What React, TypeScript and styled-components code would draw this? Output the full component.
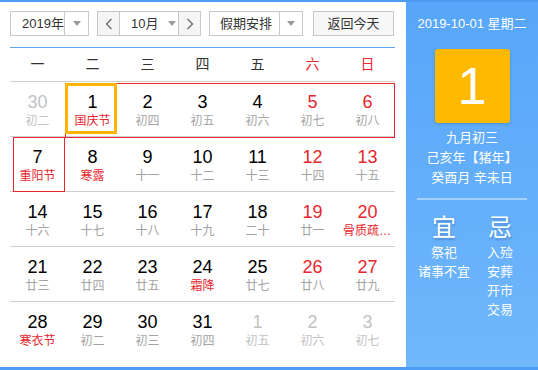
import styled, { createGlobalStyle } from 'styled-components';

const GlobalStyle = createGlobalStyle`
  html, body {
    margin: 0;
    padding: 0;
    background: #fff;
  }
  body {
    font-family: "Liberation Sans", "Noto Sans CJK SC", sans-serif;
  }
  * {
    box-sizing: border-box;
  }
`;

const RED = '#e8262d';
const GRAY = '#a3a3a3';
const MUTED = '#c2c2c2';

const Wrapper = styled.div`
  display: flex;
  width: 538px;
  height: 370px;
  border-top: 2px solid #4d9cf4;
  border-bottom: 3px solid #4d9cf4;
`;

const LeftPanel = styled.div`
  width: 406px;
  background: #fff;
  padding: 9px 11px 0 10px;
`;

const Toolbar = styled.div`
  display: flex;
  align-items: center;
  height: 25px;
`;

const Box = styled.div<{ $w: number; $ml?: number }>`
  display: flex;
  width: ${(p) => p.$w}px;
  height: 25px;
  margin-left: ${(p) => p.$ml || 0}px;
  border: 1px solid #c8c8c8;
  font-size: 13px;
  color: #333;
  white-space: nowrap;
`;

const SelectLabel = styled.div<{ $pl: number }>`
  flex: 1;
  display: flex;
  align-items: center;
  padding-left: ${(p) => p.$pl}px;
  line-height: 23px;
`;

const ArrowCell = styled.div<{ $w: number }>`
  width: ${(p) => p.$w}px;
  display: flex;
  align-items: center;
  justify-content: center;
  border-left: 1px solid #c8c8c8;
`;

const Caret = styled.span`
  flex: none;
  width: 0;
  height: 0;
  border-left: 4px solid transparent;
  border-right: 4px solid transparent;
  border-top: 5px solid #9a9a9a;
`;

const StepButton = styled.div<{ $side: 'left' | 'right' }>`
  flex: none;
  width: 22px;
  display: flex;
  align-items: center;
  justify-content: center;
  background: #f5f5f5;
  ${(p) => (p.$side === 'left' ? 'border-right' : 'border-left')}: 1px solid #c8c8c8;
`;

const MonthLabel = styled.div`
  flex: 1;
  display: flex;
  align-items: center;
  padding-left: 11px;
  gap: 10px;
  line-height: 23px;
`;

const TodayButton = styled.div`
  width: 81px;
  height: 25px;
  margin-left: 10px;
  border: 1px solid #c8c8c8;
  background: #f7f7f7;
  font-size: 13px;
  color: #333;
  text-align: center;
  line-height: 23px;
`;

const BlueLine = styled.div`
  height: 1px;
  margin-top: 11px;
  background: #5ea3ef;
`;

const WeekHeader = styled.div`
  display: grid;
  grid-template-columns: repeat(7, 55px);
  height: 33px;
`;

const WeekDay = styled.div<{ $red?: boolean }>`
  text-align: center;
  line-height: 33px;
  font-size: 14px;
  color: ${(p) => (p.$red ? RED : '#333')};
`;

const WeekRow = styled.div`
  display: grid;
  grid-template-columns: repeat(7, 55px);
  grid-template-rows: 54px;
  border-top: 1px solid #cfcfcf;
`;

const Cell = styled.div`
  grid-row: 1;
  padding-top: 10px;
  text-align: center;
  min-width: 0;
`;

const DayNum = styled.div<{ $color: string }>`
  font-size: 18px;
  line-height: 20px;
  color: ${(p) => p.$color};
`;

const Lunar = styled.div<{ $color: string }>`
  margin-top: 1px;
  padding: 0 3px;
  font-size: 12px;
  line-height: 16px;
  color: ${(p) => p.$color};
  white-space: nowrap;
  overflow: hidden;
  text-overflow: ellipsis;
`;

const HolidayFrame = styled.div<{ $from: number; $to: number; $mt: number; $ml: number }>`
  grid-row: 1;
  grid-column: ${(p) => p.$from} / ${(p) => p.$to};
  margin-top: ${(p) => p.$mt}px;
  margin-left: ${(p) => p.$ml}px;
  height: 55px;
  border: 1px solid ${RED};
  position: relative;
  z-index: 1;
  pointer-events: none;
`;

const TodayFrame = styled.div<{ $col: number }>`
  grid-row: 1;
  grid-column: ${(p) => p.$col};
  align-self: start;
  margin-top: 1px;
  width: 52px;
  height: 51px;
  border: 3px solid #ffb400;
  position: relative;
  z-index: 2;
  pointer-events: none;
`;

const RightPanel = styled.div`
  flex: 1;
  display: flex;
  flex-direction: column;
  align-items: center;
  padding-top: 12px;
  background: linear-gradient(#57a6f9, #70b7fc);
  color: #fff;
  font-size: 13px;
`;

const DateLine = styled.div`
  line-height: 20px;
`;

const BigDay = styled.div`
  width: 75px;
  height: 74px;
  margin-top: 15px;
  border-radius: 3px;
  background: #ffb900;
  box-shadow: 0 1px 3px rgba(0, 0, 0, 0.18);
  display: flex;
  align-items: center;
  justify-content: center;
  font-size: 52px;
  line-height: 1;
`;

const InfoLines = styled.div`
  margin-top: 5px;
  text-align: center;
  line-height: 20px;
`;

const Separator = styled.div`
  width: 110px;
  height: 2px;
  margin-top: 10px;
  background: rgba(255, 255, 255, 0.4);
`;

const Almanac = styled.div`
  display: flex;
  margin-top: 13px;
`;

const AlmanacCol = styled.div`
  width: 56px;
  text-align: center;
`;

const AlmanacTitle = styled.div`
  font-size: 24px;
  line-height: 30px;
  text-shadow: 1px 2px 2px rgba(40, 80, 140, 0.35);
`;

const AlmanacItem = styled.div`
  line-height: 19px;
  white-space: nowrap;
`;

function Chevron({ dir }: { dir: 'left' | 'right' }) {
  return (
    <svg width="8" height="12" viewBox="0 0 8 12">
      <polyline
        points={dir === 'left' ? '6.5,1 1.5,6 6.5,11' : '1.5,1 6.5,6 1.5,11'}
        fill="none"
        stroke="#666"
        strokeWidth="1.2"
      />
    </svg>
  );
}

interface Day {
  n: number;
  lunar: string;
  other?: boolean;
  fest?: boolean;
}

const weeks: Day[][] = [
  [
    { n: 30, lunar: '初二', other: true },
    { n: 1, lunar: '国庆节', fest: true },
    { n: 2, lunar: '初四' },
    { n: 3, lunar: '初五' },
    { n: 4, lunar: '初六' },
    { n: 5, lunar: '初七' },
    { n: 6, lunar: '初八' },
  ],
  [
    { n: 7, lunar: '重阳节', fest: true },
    { n: 8, lunar: '寒露', fest: true },
    { n: 9, lunar: '十一' },
    { n: 10, lunar: '十二' },
    { n: 11, lunar: '十三' },
    { n: 12, lunar: '十四' },
    { n: 13, lunar: '十五' },
  ],
  [
    { n: 14, lunar: '十六' },
    { n: 15, lunar: '十七' },
    { n: 16, lunar: '十八' },
    { n: 17, lunar: '十九' },
    { n: 18, lunar: '二十' },
    { n: 19, lunar: '廿一' },
    { n: 20, lunar: '骨质疏松日', fest: true },
  ],
  [
    { n: 21, lunar: '廿三' },
    { n: 22, lunar: '廿四' },
    { n: 23, lunar: '廿五' },
    { n: 24, lunar: '霜降', fest: true },
    { n: 25, lunar: '廿七' },
    { n: 26, lunar: '廿八' },
    { n: 27, lunar: '廿九' },
  ],
  [
    { n: 28, lunar: '寒衣节', fest: true },
    { n: 29, lunar: '初二' },
    { n: 30, lunar: '初三' },
    { n: 31, lunar: '初四' },
    { n: 1, lunar: '初五', other: true },
    { n: 2, lunar: '初六', other: true },
    { n: 3, lunar: '初七', other: true },
  ],
];

const weekNames = ['一', '二', '三', '四', '五', '六', '日'];

export default function App() {
  return (
    <>
      <GlobalStyle />
      <Wrapper>
        <LeftPanel>
          <Toolbar>
            <Box $w={79}>
              <SelectLabel $pl={11}>2019年</SelectLabel>
              <ArrowCell $w={24}>
                <Caret />
              </ArrowCell>
            </Box>
            <Box $w={104} $ml={8}>
              <StepButton $side="left">
                <Chevron dir="left" />
              </StepButton>
              <MonthLabel>
                <span>10月</span>
                <Caret />
              </MonthLabel>
              <StepButton $side="right">
                <Chevron dir="right" />
              </StepButton>
            </Box>
            <Box $w={94} $ml={8}>
              <SelectLabel $pl={10}>假期安排</SelectLabel>
              <ArrowCell $w={23}>
                <Caret />
              </ArrowCell>
            </Box>
            <TodayButton>返回今天</TodayButton>
          </Toolbar>
          <BlueLine />
          <WeekHeader>
            {weekNames.map((w, i) => (
              <WeekDay key={w} $red={i >= 5}>
                {w}
              </WeekDay>
            ))}
          </WeekHeader>
          {weeks.map((week, wi) => (
            <WeekRow key={wi}>
              {week.map((d, di) => {
                const numColor = d.other ? MUTED : di >= 5 ? RED : '#000';
                const lunarColor = d.other ? MUTED : d.fest ? RED : GRAY;
                return (
                  <Cell key={di} style={{ gridColumn: di + 1 }}>
                    <DayNum $color={numColor}>{d.n}</DayNum>
                    <Lunar $color={lunarColor}>{d.lunar}</Lunar>
                  </Cell>
                );
              })}
              {wi === 0 && <HolidayFrame $from={2} $to={8} $mt={1} $ml={0} />}
              {wi === 0 && <TodayFrame $col={2} />}
              {wi === 1 && <HolidayFrame $from={1} $to={2} $mt={0} $ml={3} />}
            </WeekRow>
          ))}
        </LeftPanel>
        <RightPanel>
          <DateLine>2019-10-01 星期二</DateLine>
          <BigDay>1</BigDay>
          <InfoLines>
            <div>九月初三</div>
            <div>己亥年【猪年】</div>
            <div>癸酉月 辛未日</div>
          </InfoLines>
          <Separator />
          <Almanac>
            <AlmanacCol>
              <AlmanacTitle>宜</AlmanacTitle>
              <AlmanacItem>祭祀</AlmanacItem>
              <AlmanacItem>诸事不宜</AlmanacItem>
            </AlmanacCol>
            <AlmanacCol>
              <AlmanacTitle>忌</AlmanacTitle>
              <AlmanacItem>入殓</AlmanacItem>
              <AlmanacItem>安葬</AlmanacItem>
              <AlmanacItem>开市</AlmanacItem>
              <AlmanacItem>交易</AlmanacItem>
            </AlmanacCol>
          </Almanac>
        </RightPanel>
      </Wrapper>
    </>
  );
}
